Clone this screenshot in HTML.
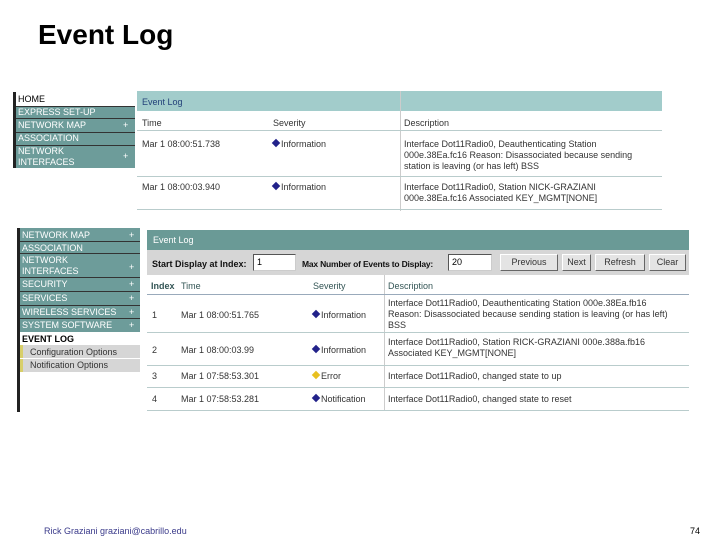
<!DOCTYPE html>
<html><head><meta charset="utf-8"><style>
*{margin:0;padding:0;box-sizing:border-box}
body{width:720px;height:540px;background:#fff;position:relative;overflow:hidden;font-family:"Liberation Sans",sans-serif}
.a{position:absolute;white-space:nowrap}
.t{font-size:9px;color:#333}
.s{font-size:9px;color:#fff}
.b{font-weight:bold}
.btn{position:absolute;top:254px;height:17px;background:#e4e4e4;border:1px solid #fff;border-right-color:#666;border-bottom-color:#666;font-size:9px;color:#333;text-align:center;line-height:15px}
.inp{position:absolute;top:254px;height:17px;background:#fff;border:1px solid #555;border-right-color:#ccc;border-bottom-color:#ccc;font-size:9px;padding-left:3px;line-height:15px}
.hl{position:absolute;height:1px;background:#b9cccc}
.dia{display:inline-block;width:6px;height:6px;background:#22228a;transform:rotate(45deg);margin-right:2px;vertical-align:1px}
</style></head><body>
<div class="a b" style="left:38px;top:19px;font-size:28px;color:#000">Event Log</div>

<div class="a" style="left:13px;top:92px;width:122px;height:76px;background:#6d9c9a"></div>
<div class="a" style="left:13px;top:92px;width:3px;height:76px;background:#222"></div>
<div class="a" style="left:16px;top:92px;width:119px;height:14px;background:#fff;font-size:9px;color:#000;padding-left:2px;line-height:14px">HOME</div>
<div class="a" style="left:16px;top:106px;width:119px;height:1px;background:#333"></div>
<div class="a s" style="left:18px;top:107px">EXPRESS SET-UP</div>
<div class="a" style="left:16px;top:118px;width:119px;height:1px;background:#333"></div>
<div class="a s" style="left:18px;top:120px">NETWORK MAP</div><div class="a s" style="left:123px;top:120px">+</div>
<div class="a" style="left:16px;top:132px;width:119px;height:1px;background:#333"></div>
<div class="a s" style="left:18px;top:133px">ASSOCIATION</div>
<div class="a" style="left:16px;top:145px;width:119px;height:1px;background:#333"></div>
<div class="a s" style="left:18px;top:146px;line-height:11px">NETWORK<br>INTERFACES</div><div class="a s" style="left:123px;top:151px">+</div>

<div class="a" style="left:137px;top:91px;width:525px;height:20px;background:#a2cccb"></div>
<div class="a" style="left:142px;top:97px;font-size:9px;color:#24427a">Event Log</div>
<div class="a" style="left:400px;top:91px;width:1px;height:120px;background:#ccc"></div>
<div class="a t" style="left:142px;top:118px">Time</div>
<div class="a t" style="left:273px;top:118px">Severity</div>
<div class="a t" style="left:404px;top:118px">Description</div>
<div class="hl" style="left:137px;top:130px;width:525px"></div>
<div class="a t" style="left:142px;top:139px">Mar 1 08:00:51.738</div>
<div class="a t" style="left:273px;top:139px"><span class="dia"></span>Information</div>
<div class="a t" style="left:404px;top:139px;line-height:11px">Interface Dot11Radio0, Deauthenticating Station<br>000e.38Ea.fc16 Reason: Disassociated because sending<br>station is leaving (or has left) BSS</div>
<div class="hl" style="left:137px;top:176px;width:525px"></div>
<div class="a t" style="left:142px;top:182px">Mar 1 08:00:03.940</div>
<div class="a t" style="left:273px;top:182px"><span class="dia"></span>Information</div>
<div class="a t" style="left:404px;top:182px;line-height:11px">Interface Dot11Radio0, Station NICK-GRAZIANI<br>000e.38Ea.fc16 Associated KEY_MGMT[NONE]</div>
<div class="hl" style="left:137px;top:209px;width:525px"></div>

<div class="a" style="left:17px;top:228px;width:3px;height:184px;background:#222"></div>
<div class="a" style="left:20px;top:228px;width:120px;height:104px;background:#6d9c9a"></div>
<div class="a s" style="left:22px;top:230px">NETWORK MAP</div><div class="a s" style="left:129px;top:230px">+</div>
<div class="a" style="left:20px;top:241px;width:120px;height:1px;background:#333"></div>
<div class="a s" style="left:22px;top:243px">ASSOCIATION</div>
<div class="a" style="left:20px;top:253px;width:120px;height:1px;background:#333"></div>
<div class="a s" style="left:22px;top:255px;line-height:11px">NETWORK<br>INTERFACES</div><div class="a s" style="left:129px;top:262px">+</div>
<div class="a" style="left:20px;top:277px;width:120px;height:1px;background:#333"></div>
<div class="a s" style="left:22px;top:279px">SECURITY</div><div class="a s" style="left:129px;top:279px">+</div>
<div class="a" style="left:20px;top:291px;width:120px;height:1px;background:#333"></div>
<div class="a s" style="left:22px;top:293px">SERVICES</div><div class="a s" style="left:129px;top:293px">+</div>
<div class="a" style="left:20px;top:305px;width:120px;height:1px;background:#333"></div>
<div class="a s" style="left:22px;top:307px">WIRELESS SERVICES</div><div class="a s" style="left:129px;top:307px">+</div>
<div class="a" style="left:20px;top:318px;width:120px;height:1px;background:#333"></div>
<div class="a s" style="left:22px;top:320px">SYSTEM SOFTWARE</div><div class="a s" style="left:129px;top:320px">+</div>
<div class="a b" style="left:22px;top:334px;font-size:9px;color:#000">EVENT LOG</div>
<div class="a" style="left:20px;top:345px;width:120px;height:27px;background:#d6d6d6"></div>
<div class="a" style="left:20px;top:345px;width:3px;height:27px;background:#d8cf6a"></div>
<div class="a t" style="left:30px;top:347px">Configuration Options</div>
<div class="a" style="left:20px;top:358px;width:120px;height:1px;background:#fff"></div>
<div class="a t" style="left:30px;top:360px">Notification Options</div>

<div class="a" style="left:147px;top:230px;width:542px;height:20px;background:#6a9a96"></div>
<div class="a" style="left:153px;top:235px;font-size:9px;color:#fff">Event Log</div>
<div class="a" style="left:147px;top:250px;width:542px;height:25px;background:#d6d6d6"></div>
<div class="a b" style="left:152px;top:259px;font-size:9px;color:#111">Start Display at Index:</div>
<div class="inp" style="left:253px;width:43px">1</div>
<div class="a b" style="left:302px;top:259px;font-size:8.5px;color:#111;letter-spacing:-0.2px">Max Number of Events to Display:</div>
<div class="inp" style="left:448px;width:44px">20</div>
<div class="btn" style="left:500px;width:58px">Previous</div>
<div class="btn" style="left:562px;width:29px">Next</div>
<div class="btn" style="left:595px;width:50px">Refresh</div>
<div class="btn" style="left:649px;width:37px">Clear</div>
<div class="a" style="left:384px;top:275px;width:1px;height:135px;background:#ccc"></div>
<div class="a t b" style="left:151px;top:281px;color:#355">Index</div>
<div class="a t" style="left:181px;top:281px;color:#355">Time</div>
<div class="a t" style="left:313px;top:281px;color:#355">Severity</div>
<div class="a t" style="left:388px;top:281px;color:#355">Description</div>
<div class="hl" style="left:147px;top:294px;width:542px;background:#9ab"></div>
<div class="a t" style="left:152px;top:310px">1</div>
<div class="a t" style="left:181px;top:310px">Mar 1 08:00:51.765</div>
<div class="a t" style="left:313px;top:310px"><span class="dia"></span>Information</div>
<div class="a t" style="left:388px;top:298px;line-height:11px">Interface Dot11Radio0, Deauthenticating Station 000e.38Ea.fb16<br>Reason: Disassociated because sending station is leaving (or has left)<br>BSS</div>
<div class="hl" style="left:147px;top:332px;width:542px"></div>
<div class="a t" style="left:152px;top:345px">2</div>
<div class="a t" style="left:181px;top:345px">Mar 1 08:00:03.99</div>
<div class="a t" style="left:313px;top:345px"><span class="dia"></span>Information</div>
<div class="a t" style="left:388px;top:337px;line-height:11px">Interface Dot11Radio0, Station RICK-GRAZIANI 000e.388a.fb16<br>Associated KEY_MGMT[NONE]</div>
<div class="hl" style="left:147px;top:365px;width:542px"></div>
<div class="a t" style="left:152px;top:371px">3</div>
<div class="a t" style="left:181px;top:371px">Mar 1 07:58:53.301</div>
<div class="a t" style="left:313px;top:371px"><span class="dia" style="background:#e8c020"></span>Error</div>
<div class="a t" style="left:388px;top:371px">Interface Dot11Radio0, changed state to up</div>
<div class="hl" style="left:147px;top:387px;width:542px"></div>
<div class="a t" style="left:152px;top:394px">4</div>
<div class="a t" style="left:181px;top:394px">Mar 1 07:58:53.281</div>
<div class="a t" style="left:313px;top:394px"><span class="dia"></span>Notification</div>
<div class="a t" style="left:388px;top:394px">Interface Dot11Radio0, changed state to reset</div>
<div class="hl" style="left:147px;top:410px;width:542px"></div>

<div class="a" style="left:44px;top:526px;font-size:9px;color:#3a3a8a">Rick Graziani graziani@cabrillo.edu</div>
<div class="a" style="left:690px;top:526px;font-size:9px;color:#000">74</div>
</body></html>
